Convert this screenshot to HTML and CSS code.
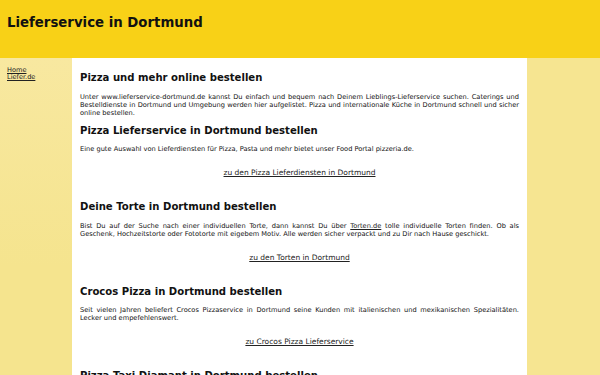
FILE: index.html
```html
<!DOCTYPE html>
<html lang="de">
<head>
    <meta charset="UTF-8">
    <title>Lieferservice in Dortmund</title>
    <link rel="stylesheet" href="styles.css">
</head>
<body>
    <div class="header">
        <h1>Lieferservice in Dortmund</h1>
    </div>
    <div class="page">
        <div class="nav">
            <a href="#">Home</a>
            <a href="#">Liefer.de</a>
        </div>
        <div class="content">
            <h2>Pizza und mehr online bestellen</h2>
            <p>Unter www.lieferservice-dortmund.de kannst Du einfach und bequem nach Deinem Lieblings-Lieferservice suchen. Caterings und Bestelldienste in Dortmund und Umgebung werden hier aufgelistet. Pizza und internationale Küche in Dortmund schnell und sicher online bestellen.</p>

            <h2>Pizza Lieferservice in Dortmund bestellen</h2>
            <p>Eine gute Auswahl von Lieferdiensten für Pizza, Pasta und mehr bietet unser Food Portal pizzeria.de.</p>
            <p class="more"><a href="#">zu den Pizza Lieferdiensten in Dortmund</a></p>

            <h2 class="gap">Deine Torte in Dortmund bestellen</h2>
            <p>Bist Du auf der Suche nach einer individuellen Torte, dann kannst Du über <a href="#">Torten.de</a> tolle individuelle Torten finden. Ob als Geschenk, Hochzeitstorte oder Fototorte mit eigebem Motiv. Alle werden sicher verpackt und zu Dir nach Hause geschickt.</p>
            <p class="more"><a href="#">zu den Torten in Dortmund</a></p>

            <h2 class="gap">Crocos Pizza in Dortmund bestellen</h2>
            <p>Seit vielen Jahren beliefert Crocos Pizzaservice in Dortmund seine Kunden mit italienischen und mexikanischen Spezialitäten. Lecker und empefehlenswert.</p>
            <p class="more"><a href="#">zu Crocos Pizza Lieferservice</a></p>

            <h2 class="gap">Pizza Taxi Diamant in Dortmund bestellen</h2>
            <p>Pizza Taxi Diamant liefert in Dortmund Pizza, Pasta und Salate schnell und zuverlässig nach Hause.</p>
        </div>
        <div class="side"></div>
    </div>
</body>
</html>
```

FILE: styles.css
```css
body {
    margin: 0;
    font-family: "DejaVu Sans", Verdana, sans-serif;
    color: #111;
    background-color: #f6e591;
}
a {
    color: #222;
}
.header {
    height: 58px;
    background-color: #f8d117;
    padding: 0 7px;
    box-sizing: border-box;
}
.header h1 {
    margin: 0;
    padding-top: 14px;
    font-size: 13.3px;
    line-height: 18px;
}
.page {
    display: flex;
    min-height: 317px;
}
.nav {
    width: 65px;
    padding: 9px 0 0 7px;
    display: flex;
    flex-direction: column;
    font-size: 6.6px;
    line-height: 7px;
    background: linear-gradient(#f8e8a0, #f5e48e 60%);
}
.content {
    flex: 1;
    background-color: white;
    padding: 12px 8px 0 8px;
}
.side {
    width: 73px;
}
h2 {
    margin: 0;
    font-size: 10.1px;
    line-height: 16px;
}
h2.gap {
    margin-top: 22px;
}
p {
    margin: 6.5px 0 6px 0;
    font-size: 6.65px;
    line-height: 8px;
    text-align: justify;
}
p.more {
    text-align: center;
    font-size: 7.5px;
    margin-top: 16px;
}
```
